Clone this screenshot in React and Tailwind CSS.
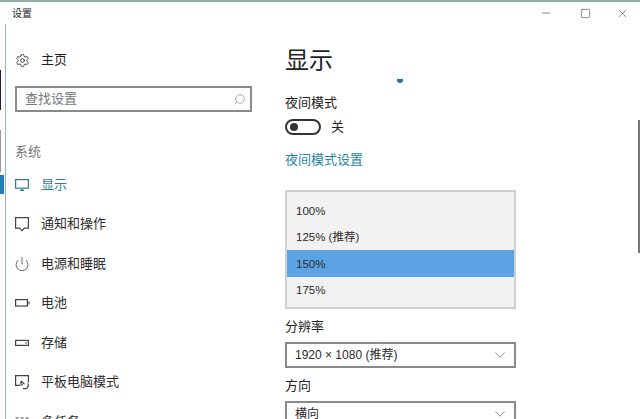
import React from 'react';
import { Settings, Search, Power, ChevronDown, Minus, Square, X } from 'lucide-react';

const font = { fontFamily: '"Liberation Sans", "Noto Sans CJK SC", sans-serif' };

const MonitorIcon = () => (
  <svg width="16" height="14" viewBox="0 0 16 14" fill="none" stroke="currentColor" strokeWidth="1.2">
    <rect x="1.6" y="1.6" width="12.8" height="8.6" />
    <path d="M6 12.4h4M8 10.2v2" />
  </svg>
);

const NotifyIcon = () => (
  <svg width="16" height="16" viewBox="0 0 16 16" fill="none" stroke="currentColor" strokeWidth="1.2">
    <path d="M1.6 1.6h12.8v10.6h-4L8 14.6l-2.4-2.4h-4z" />
  </svg>
);

const BatteryIcon = () => (
  <svg width="16" height="10" viewBox="0 0 16 10" fill="none" stroke="currentColor" strokeWidth="1.2">
    <rect x="1.6" y="1.6" width="11.8" height="6.4" />
    <path d="M15 3.4v3" />
  </svg>
);

const StorageIcon = () => (
  <svg width="16" height="8" viewBox="0 0 16 8" fill="none" stroke="currentColor" strokeWidth="1.2">
    <rect x="1.6" y="1.4" width="12.8" height="5" />
    <path d="M11.4 3.9h1.4" />
  </svg>
);

const TabletIcon = () => (
  <svg width="16" height="16" viewBox="0 0 16 16" fill="none" stroke="currentColor" strokeWidth="1.2">
    <path d="M6 11.4H1.6V1.6h12.8v7" />
    <path d="M7 7l3.5 3.2M7 7v4h2M9 14.6h3.4l1.8-2v-3" />
  </svg>
);

const MultitaskIcon = () => (
  <svg width="16" height="14" viewBox="0 0 16 14" fill="none" stroke="currentColor" strokeWidth="1.2">
    <path d="M1.6 3h3M6.6 3h3M11.6 3h3M1.6 8h12.8" />
  </svg>
);

const navItems = [
  { label: '显示', icon: <MonitorIcon />, active: true, h: 'h-[38px]' },
  { label: '通知和操作', icon: <NotifyIcon />, h: 'h-[40px]' },
  { label: '电源和睡眠', icon: <Power size={16} strokeWidth={1.2} />, h: 'h-[39px]' },
  { label: '电池', icon: <BatteryIcon />, h: 'h-[40px]' },
  { label: '存储', icon: <StorageIcon />, h: 'h-[39px]' },
  { label: '平板电脑模式', icon: <TabletIcon />, h: 'h-[40px]' },
  { label: '多任务', icon: <MultitaskIcon />, h: 'h-[39px]' },
];

const scales = ['100%', '125% (推荐)', '150%', '175%'];

const NavRow = ({ item }) => (
  <div className={`relative flex items-center shrink-0 ${item.h}`}>
    <div className={`w-[20px] flex justify-center ml-[-3px] ${item.active ? 'text-[#2c7f96]' : 'text-[#444444]'}`}>
      {item.icon}
    </div>
    <span className={`ml-[9px] text-[13px] ${item.active ? 'text-[#2c7f96]' : 'text-[#2b2b2b]'}`}>{item.label}</span>
  </div>
);

const SelectBox = ({ children }) => (
  <div className="w-[231px] h-[26px] shrink-0 border-2 border-[#8a8a8a] bg-white flex items-center justify-between pl-[8px] pr-[5px]">
    <span className="text-[12px] text-[#2b2b2b]">{children}</span>
    <ChevronDown size={18} strokeWidth={1} className="text-[#666666]" />
  </div>
);

export default function App() {
  return (
    <div className="relative w-[640px] h-[419px] overflow-hidden bg-white flex flex-col" style={font}>
      <div className="h-[2px] shrink-0 bg-[#8fb0a8]" />
      <div className="h-[22px] shrink-0 flex items-center justify-between pl-[12px]">
        <span className="text-[10px] text-[#222222]">设置</span>
        <div className="flex items-center text-[#333333]">
          <div className="w-[40px] flex justify-center"><Minus size={12} strokeWidth={1.2} /></div>
          <div className="w-[38px] flex justify-center"><Square size={11} strokeWidth={1.2} /></div>
          <div className="w-[36px] flex justify-center"><X size={13} strokeWidth={1} /></div>
        </div>
      </div>

      <div className="flex flex-1 min-h-0">
        {/* left window edge */}
        <div className="w-[6px] shrink-0 border-r border-[#8fbcc4]" />

        {/* sidebar */}
        <div className="w-[279px] shrink-0 flex flex-col pl-[9px]">
          <div className="h-[24px] mt-[24px] flex items-center shrink-0">
            <Settings size={15} strokeWidth={1.3} className="text-[#222222]" />
            <span className="ml-[11px] text-[13px] text-[#1f1f1f]">主页</span>
          </div>
          <div className="mt-[14px] w-[237px] h-[26px] shrink-0 border-2 border-[#8a8a8a] flex items-center justify-between pl-[8px] pr-[4px]">
            <span className="text-[13px] text-[#777777]">查找设置</span>
            <Search size={13} strokeWidth={1.4} className="text-[#999999] -scale-x-100" />
          </div>
          <div className="mt-[31px] h-[18px] flex items-center text-[13px] text-[#777777] shrink-0">系统</div>
          <div className="mt-[5px] flex flex-col">
            {navItems.map((item) => (
              <NavRow key={item.label} item={item} />
            ))}
          </div>
        </div>

        {/* content */}
        <div className="flex-1 flex flex-col">
          <div className="h-[32px] mt-[21px] flex items-center text-[24px] text-[#1f1f1f] shrink-0">显示</div>
          <div className="mt-[17px] h-[18px] flex items-center text-[13px] text-[#222222] shrink-0">夜间模式</div>
          <div className="mt-[5px] h-[20px] flex items-center shrink-0">
            <div className="w-[36px] h-[16px] rounded-full border-2 border-[#333333] flex items-center pl-[3px]">
              <div className="w-[8px] h-[8px] rounded-full bg-[#333333]" />
            </div>
            <span className="ml-[10px] text-[13px] text-[#222222]">关</span>
          </div>
          <div className="mt-[14px] h-[18px] flex items-center text-[13px] text-[#1f86a8] shrink-0">夜间模式设置</div>

          <div className="mt-[21px] w-[231px] h-[119px] shrink-0 border-2 border-[#cfcfcf] bg-[#f2f2f2] flex flex-col pt-[5px]">
            {scales.map((s) => (
              <div
                key={s}
                className={`h-[26.5px] flex items-center pl-[9px] pt-[2px] text-[11.5px] text-[#2b2b2b] ${s === '150%' ? 'bg-[#5ba3e2]' : ''}`}
              >
                {s}
              </div>
            ))}
          </div>

          <div className="mt-[9px] h-[18px] flex items-center text-[13px] text-[#222222] shrink-0">分辨率</div>
          <div className="mt-[6px]"><SelectBox>1920 × 1080 (推荐)</SelectBox></div>
          <div className="mt-[9px] h-[18px] flex items-center text-[13px] text-[#222222] shrink-0">方向</div>
          <div className="mt-[6px]"><SelectBox>横向</SelectBox></div>
        </div>
      </div>

      {/* overlays */}
      <div className="absolute left-0 top-[70px] w-[1px] h-[40px] bg-[#222222]" />
      <div className="absolute left-0 top-[130px] w-[1px] h-[42px] bg-[#999999]" />
      <div className="absolute left-0 top-[175px] w-[4px] h-[19px] bg-[#1f7fb5]" />
      <div className="absolute left-[397px] top-[79px] w-[6px] h-[4px] rounded-b-full bg-[#2f6f9f]" />
      <div className="absolute left-[638px] top-[120px] w-[2px] h-[133px] bg-[#777777]" />
    </div>
  );
}
